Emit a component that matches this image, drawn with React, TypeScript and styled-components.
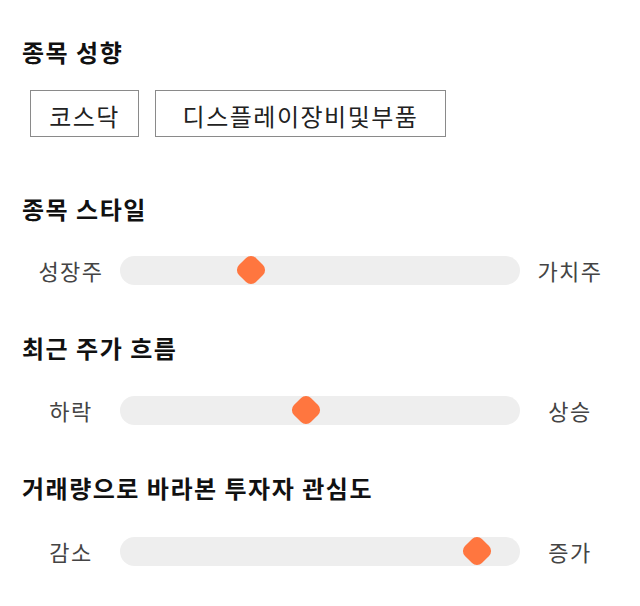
import React from "react";
import styled, { createGlobalStyle } from "styled-components";

const Global = createGlobalStyle`
  html, body { margin: 0; padding: 0; background: #fff; }
  body { font-family: "Noto Sans CJK KR", "Noto Sans", sans-serif; }
`;

const Page = styled.div`
  padding: 36px 20px 0 22px;
  display: flex;
  flex-direction: column;
`;

const Title = styled.h2<{ $gap: number }>`
  margin: ${(p) => p.$gap}px 0 0 0;
  font-size: 24px;
  letter-spacing: 1.5px;
  line-height: 32px;
  font-weight: 700;
  color: #111;
`;

const Chips = styled.div`
  display: flex;
  gap: 16px;
  margin: 22px 0 0 8px;
`;

const Chip = styled.div<{ $width: number }>`
  box-sizing: border-box;
  width: ${(p) => p.$width}px;
  height: 47px;
  border: 1px solid #8a8a8a;
  display: flex;
  align-items: center;
  justify-content: center;
  font-size: 24px;
  letter-spacing: 1.5px;
  color: #222;
  padding-top: 4px;
`;

const SliderRow = styled.div<{ $gap: number }>`
  display: grid;
  grid-template-columns: 98px 400px 100px;
  align-items: center;
  margin-top: ${(p) => p.$gap}px;
  height: 30px;
`;

const Label = styled.span`
  text-align: center;
  font-size: 22px;
  letter-spacing: 1.5px;
  color: #444;
  line-height: 30px;
`;

const Track = styled.div`
  position: relative;
  height: 29px;
  border-radius: 15px;
  background: #eeeeee;
`;

const Thumb = styled.div`
  position: absolute;
  top: 50%;
  width: 24px;
  height: 24px;
  margin-left: -12px;
  margin-top: -12px;
  background: #ff763f;
  border-radius: 7px;
  transform: rotate(45deg);
`;

const Slider = ({ left, right, pos, gap }: { left: string; right: string; pos: number; gap: number }) => (
  <SliderRow $gap={gap}>
    <Label>{left}</Label>
    <Track>
      <Thumb style={{ left: `${pos}px` }} />
    </Track>
    <Label>{right}</Label>
  </SliderRow>
);

export default function App() {
  return (
    <>
      <Global />
      <Page>
        <Title $gap={0}>종목 성향</Title>
        <Chips>
          <Chip $width={109}>코스닥</Chip>
          <Chip $width={291}>디스플레이장비및부품</Chip>
        </Chips>
        <Title $gap={56}>종목 스타일</Title>
        <Slider gap={30} left="성장주" right="가치주" pos={131} />
        <Title $gap={47}>최근 주가 흐름</Title>
        <Slider gap={31} left="하락" right="상승" pos={186} />
        <Title $gap={47}>거래량으로 바라본 투자자 관심도</Title>
        <Slider gap={32} left="감소" right="증가" pos={357} />
      </Page>
    </>
  );
}
